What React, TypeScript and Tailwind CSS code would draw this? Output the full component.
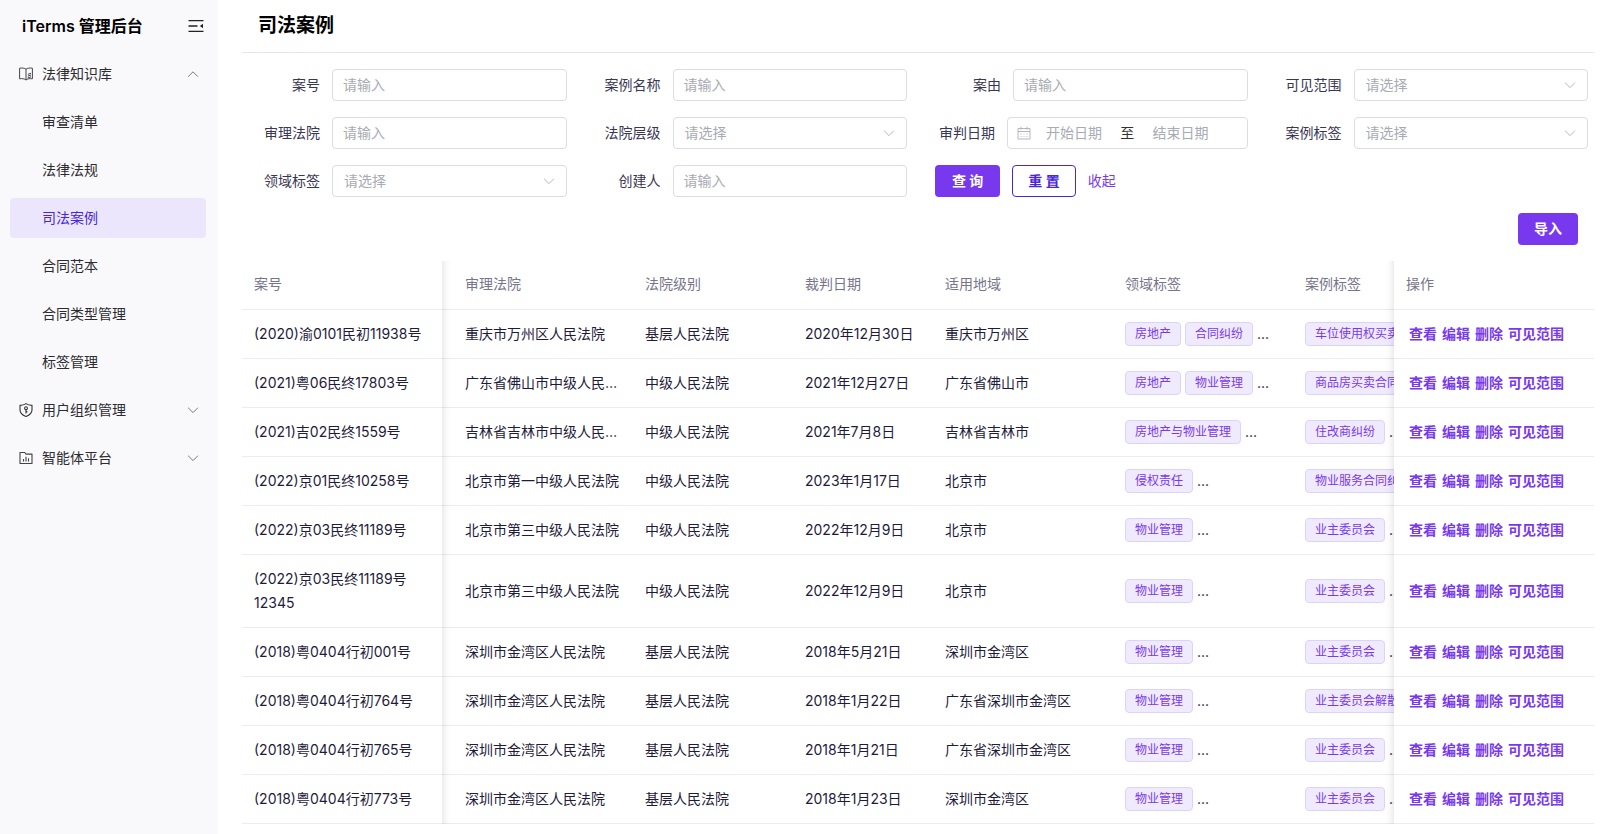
import { useState, type ReactNode } from 'react'
import clsx from 'clsx'

interface CaseRow {
  no: string
  court: string
  level: string
  date: string
  region: string
  domains: string[]
  tags: string[]
}

const rows: CaseRow[] = [
  { no: '(2020)渝0101民初11938号', court: '重庆市万州区人民法院', level: '基层人民法院', date: '2020年12月30日', region: '重庆市万州区', domains: ['房地产', '合同纠纷'], tags: ['车位使用权买卖'] },
  { no: '(2021)粤06民终17803号', court: '广东省佛山市中级人民法院', level: '中级人民法院', date: '2021年12月27日', region: '广东省佛山市', domains: ['房地产', '物业管理'], tags: ['商品房买卖合同'] },
  { no: '(2021)吉02民终1559号', court: '吉林省吉林市中级人民法院', level: '中级人民法院', date: '2021年7月8日', region: '吉林省吉林市', domains: ['房地产与物业管理'], tags: ['住改商纠纷'] },
  { no: '(2022)京01民终10258号', court: '北京市第一中级人民法院', level: '中级人民法院', date: '2023年1月17日', region: '北京市', domains: ['侵权责任'], tags: ['物业服务合同纠纷'] },
  { no: '(2022)京03民终11189号', court: '北京市第三中级人民法院', level: '中级人民法院', date: '2022年12月9日', region: '北京市', domains: ['物业管理'], tags: ['业主委员会'] },
  { no: '(2022)京03民终11189号12345', court: '北京市第三中级人民法院', level: '中级人民法院', date: '2022年12月9日', region: '北京市', domains: ['物业管理'], tags: ['业主委员会'] },
  { no: '(2018)粤0404行初001号', court: '深圳市金湾区人民法院', level: '基层人民法院', date: '2018年5月21日', region: '深圳市金湾区', domains: ['物业管理'], tags: ['业主委员会'] },
  { no: '(2018)粤0404行初764号', court: '深圳市金湾区人民法院', level: '基层人民法院', date: '2018年1月22日', region: '广东省深圳市金湾区', domains: ['物业管理'], tags: ['业主委员会解散'] },
  { no: '(2018)粤0404行初765号', court: '深圳市金湾区人民法院', level: '基层人民法院', date: '2018年1月21日', region: '广东省深圳市金湾区', domains: ['物业管理'], tags: ['业主委员会'] },
  { no: '(2018)粤0404行初773号', court: '深圳市金湾区人民法院', level: '基层人民法院', date: '2018年1月23日', region: '深圳市金湾区', domains: ['物业管理'], tags: ['业主委员会'] },
]

const lawMenu = ['审查清单', '法律法规', '司法案例', '合同范本', '合同类型管理', '标签管理']
const actions = ['查看', '编辑', '删除', '可见范围']

function Chevron({ up = false, className = '' }: { up?: boolean; className?: string }) {
  return (
    <svg width="12" height="12" viewBox="0 0 12 12" fill="none" stroke="currentColor" className={className}>
      <path d={up ? 'M1.400 8.400 6 3.800l4.600 4.600' : 'M1.400 4l4.600 4.600L10.600 4'} strokeLinecap="round" strokeLinejoin="round" />
    </svg>
  )
}

function FoldIcon() {
  return (
    <svg width="16" height="16" viewBox="0 0 16 16" fill="none" stroke="#222" strokeWidth="1.3">
      <path d="M.5 2.6h15M.5 8h9M.5 13.4h15" />
      <path d="M15 5.8v4.4L11.8 8z" fill="#222" stroke="none" />
    </svg>
  )
}

function BookIcon() {
  return (
    <svg width="14" height="14" viewBox="0 0 14 14" fill="none" stroke="#444" strokeLinejoin="round">
      <path d="M7 2.200C5.600 1 3 .8.6 1.200v10.600C3 11.400 5.600 11.700 7 13c1.400-1.300 4-1.600 6.400-1.200V1.200C11 .8 8.400 1 7 2.200z" />
      <path d="M7 2.200V13M8.800 7.400l3.200-1.200M8.800 9.200l3.200-1.200M8.800 11l3.200-1.200" />
    </svg>
  )
}

function ShieldIcon() {
  return (
    <svg width="14" height="14" viewBox="0 0 14 14" fill="none" stroke="#333" strokeWidth="1.1" strokeLinejoin="round">
      <path d="M7 .6c1.800 1.200 3.800 1.700 6 1.800v4.400c0 3.200-2.400 5.400-6 6.700-3.600-1.300-6-3.500-6-6.700V2.400C3.200 2.300 5.200 1.800 7 .6z" />
      <circle cx="7" cy="5.200" r="1.400" />
      <path d="M7 6.600v3.800M7 8.600h1.400" />
    </svg>
  )
}

function ChartIcon() {
  return (
    <svg width="14" height="14" viewBox="0 0 14 14" fill="none" stroke="#444" strokeWidth="1.1" strokeLinejoin="round">
      <path d="M1 1.500h4.800l1.200 1.600h6v9.400H1z" />
      <path d="M4.500 8v2.500M7 5.800v4.700M9.500 7.200v3.300" />
    </svg>
  )
}

function CalendarIcon() {
  return (
    <svg width="14" height="14" viewBox="0 0 14 14" fill="none" stroke="#b4b7be" className="shrink-0">
      <path d="M1 2.500h12v10.500H1zM1 5.500h12M4 .8v3M10 .8v3" />
      <path d="M3.500 8h1M6.500 8h1M9.500 8h1M3.500 10.500h1M6.500 10.500h1M9.500 10.500h1" />
    </svg>
  )
}

function NavGroup({ icon, label, open, onToggle }: { icon: ReactNode; label: string; open?: boolean; onToggle?: () => void }) {
  return (
    <button
      type="button"
      aria-expanded={!!open}
      onClick={onToggle}
      className="flex h-10 w-full items-center gap-[9px] pr-[7px] pl-[9px] text-left text-[#2c2c30]"
    >
      {icon}
      <span className="flex-1">{label}</span>
      <Chevron up={open} className="text-[#77777f]" />
    </button>
  )
}

function Field({ id, label, wide = false, children }: { id: string; label: string; wide?: boolean; children: ReactNode }) {
  return (
    <div className="flex items-center gap-3">
      <label htmlFor={id} className={clsx('shrink-0 text-right text-[#3a3653]', wide ? 'w-[72px]' : 'w-[78px]')}>
        {label}
      </label>
      <div className="relative min-w-0 flex-1">{children}</div>
    </div>
  )
}

function TextField({ id, label }: { id: string; label: string }) {
  return (
    <Field id={id} label={label}>
      <input
        id={id}
        placeholder="请输入"
        className="block h-8 w-full rounded border border-[#dcdce8] bg-white px-2.5 pb-0.5 placeholder:text-[#a8abb2] focus:outline-none"
      />
    </Field>
  )
}

function SelectField({ id, label }: { id: string; label: string }) {
  return (
    <Field id={id} label={label}>
      <select
        id={id}
        defaultValue=""
        className="block h-8 w-full appearance-none rounded border border-[#dcdce8] bg-white px-[11px] text-[#a8abb2] focus:outline-none"
      >
        <option value="">请选择</option>
      </select>
      <Chevron className="pointer-events-none absolute top-2.5 right-3 text-[#b4b7be]" />
    </Field>
  )
}

function Tags({ items }: { items: string[] }) {
  return (
    <div className="flex items-center gap-1 overflow-hidden whitespace-nowrap">
      {items.map((item) => (
        <span
          key={item}
          className="h-6 shrink-0 rounded border border-[#ddd2fb] bg-[#f0eafd] px-[9px] text-xs leading-[22px] text-[#7839ee]"
        >
          {item}
        </span>
      ))}
      <span>...</span>
    </div>
  )
}

const cell = 'border-b border-[#ebebf3] px-3'
// shadows cast by the two pinned columns over the scrolled content
const pinnedLeft =
  'sticky left-0 z-10 bg-white after:pointer-events-none after:absolute after:top-0 after:-bottom-px after:left-full after:w-2.5 after:shadow-[inset_10px_0_10px_-10px_rgba(0,0,0,0.15)]'
const pinnedRight =
  'sticky right-0 z-10 bg-white before:pointer-events-none before:absolute before:top-0 before:-bottom-px before:right-full before:w-2.5 before:shadow-[inset_-10px_0_10px_-10px_rgba(0,0,0,0.15)]'

export default function App() {
  const [open, setOpen] = useState(true)
  const [active, setActive] = useState('司法案例')

  return (
    <div className="flex min-h-screen bg-white font-['Inter','Noto_Sans_CJK_SC',sans-serif] text-sm text-[#1f1b3b]">
      <aside className="w-[218px] shrink-0 bg-[#f9f9fc]">
        <div className="flex h-[52px] items-center justify-between pr-3.5 pl-[22px]">
          <span className="text-base font-semibold text-black">iTerms 管理后台</span>
          <button type="button" aria-label="收起菜单">
            <FoldIcon />
          </button>
        </div>
        <nav className="flex flex-col gap-2 py-0.5 pr-3 pl-2.5">
          <NavGroup icon={<BookIcon />} label="法律知识库" open={open} onToggle={() => setOpen(!open)} />
          {open &&
            lawMenu.map((item) => (
              <a
                key={item}
                href="#"
                onClick={() => setActive(item)}
                className={clsx(
                  'flex h-10 items-center rounded pl-8',
                  item === active ? 'bg-[#ebe6fb] text-[#4a26d9]' : 'text-[#2c2c30]'
                )}
              >
                {item}
              </a>
            ))}
          <NavGroup icon={<ShieldIcon />} label="用户组织管理" />
          <NavGroup icon={<ChartIcon />} label="智能体平台" />
        </nav>
      </aside>

      <main className="min-w-0 flex-1 pr-1.5 pl-6">
        <header className="flex h-[53px] items-center border-b border-[#e6e6ef] px-4">
          <h1 className="text-[19px] font-bold text-black">司法案例</h1>
        </header>

        <form className="grid grid-cols-4 gap-4 pt-4 pr-1.5" onSubmit={(e) => e.preventDefault()}>
          <TextField id="case-no" label="案号" />
          <TextField id="case-name" label="案例名称" />
          <TextField id="case-cause" label="案由" />
          <SelectField id="scope" label="可见范围" />
          <TextField id="court" label="审理法院" />
          <SelectField id="court-level" label="法院层级" />
          <Field id="date-start" label="审判日期" wide>
            <div className="flex h-8 items-center rounded border border-[#dcdce8] px-[9px]">
              <CalendarIcon />
              <input
                id="date-start"
                placeholder="开始日期"
                className="w-[39%] text-center placeholder:text-[#a8abb2] focus:outline-none"
              />
              <span className="flex-1 text-center whitespace-nowrap text-[#303133]">至</span>
              <input
                aria-label="结束日期"
                placeholder="结束日期"
                className="w-[39%] text-center placeholder:text-[#a8abb2] focus:outline-none"
              />
              <span className="w-3.5 shrink-0" />
            </div>
          </Field>
          <SelectField id="case-tag" label="案例标签" />
          <SelectField id="domain-tag" label="领域标签" />
          <TextField id="creator" label="创建人" />
          <div className="flex items-center gap-3 pl-3">
            <button type="submit" className="h-8 rounded bg-[#7839ee] px-[17px] font-bold text-white">
              查 询
            </button>
            <button type="reset" className="h-8 rounded border border-[#4a26d9] px-[15px] font-bold text-[#4a26d9]">
              重 置
            </button>
            <button type="button" className="text-[#7839ee]">
              收起
            </button>
          </div>
        </form>

        <div className="flex justify-end py-4 pr-4">
          <button type="button" className="h-8 rounded bg-[#7839ee] px-4 font-bold text-white">
            导入
          </button>
        </div>

        <div className="overflow-x-auto [scrollbar-width:none]">
          <table className="w-full min-w-[1431px] table-fixed border-separate border-spacing-0 text-left leading-6">
            <colgroup>
              <col className="w-[200px]" />
              <col className="w-[191px]" />
              <col className="w-[160px]" />
              <col className="w-[140px]" />
              <col className="w-[180px]" />
              <col className="w-[180px]" />
              <col />
              <col className="w-[200px]" />
            </colgroup>
            <thead>
              <tr className="h-[49px] text-[#77758a] [&>th]:pb-0.5 [&>th]:font-normal">
                <th className={clsx(cell, pinnedLeft)}>案号</th>
                <th className={clsx(cell, 'pl-[23px]')}>审理法院</th>
                <th className={cell}>法院级别</th>
                <th className={cell}>裁判日期</th>
                <th className={cell}>适用地域</th>
                <th className={cell}>领域标签</th>
                <th className={cell}>案例标签</th>
                <th className={clsx(cell, pinnedRight)}>操作</th>
              </tr>
            </thead>
            <tbody>
              {rows.map((row) => (
                <tr key={row.no}>
                  <td className={clsx(cell, pinnedLeft, 'py-3 break-words')}>{row.no}</td>
                  <td className={clsx(cell, 'truncate pl-[23px]')}>{row.court}</td>
                  <td className={cell}>{row.level}</td>
                  <td className={cell}>{row.date}</td>
                  <td className={cell}>{row.region}</td>
                  <td className={cell}>
                    <Tags items={row.domains} />
                  </td>
                  <td className={cell}>
                    <Tags items={row.tags} />
                  </td>
                  <td className={clsx(cell, pinnedRight)}>
                    <div className="flex gap-[5px] pl-[3px] font-bold whitespace-nowrap text-[#7839ee]">
                      {actions.map((action) => (
                        <a key={action} href="#">
                          {action}
                        </a>
                      ))}
                    </div>
                  </td>
                </tr>
              ))}
            </tbody>
          </table>
        </div>
      </main>
    </div>
  )
}
